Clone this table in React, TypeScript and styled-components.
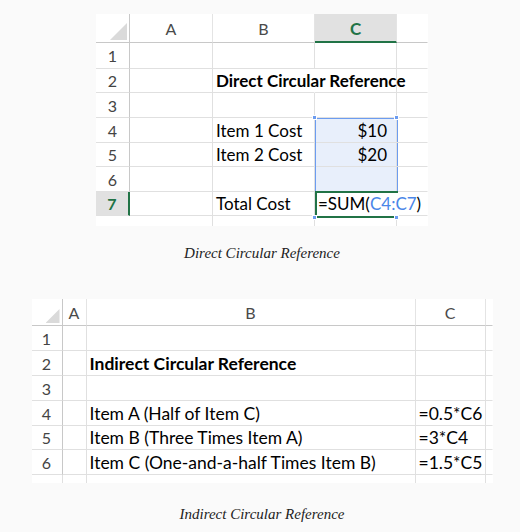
import React from "react";
import styled, { createGlobalStyle, css } from "styled-components";

const Global = createGlobalStyle`
  html, body { margin: 0; padding: 0; background: #fafafa; }
  * { box-sizing: border-box; }
`;

const GREEN = "#217346";
const BLUE = "#6c9cf0";
const GRID = "#e0e0e0";
const HEAD_LINE = "#c8c8c8";
const CELL_FONT = `"Lato", "Open Sans", sans-serif`;

const Page = styled.div`
  width: 520px;
  height: 532px;
  display: flex;
  flex-direction: column;
  align-items: center;
  padding: 14px 0 0 4px;
`;

const Sheet = styled.div<{ $cols: string; $rows: string }>`
  position: relative;
  display: grid;
  grid-template-columns: ${(p) => p.$cols};
  grid-template-rows: ${(p) => p.$rows};
  background: #fff;
  font-family: ${CELL_FONT};
  color: #000;
`;

const Corner = styled.div`
  position: relative;
  border-right: 1px solid ${HEAD_LINE};
  border-bottom: 1px solid ${HEAD_LINE};
`;

const CornerTriangle = styled.div<{ $size: number }>`
  position: absolute;
  right: 2px;
  bottom: 2px;
  width: ${(p) => p.$size}px;
  height: ${(p) => p.$size}px;
  background: #dadada;
  clip-path: polygon(100% 0, 100% 100%, 0 100%);
`;

const ColHead = styled.div<{ $active?: boolean; $size: number; $last?: boolean }>`
  display: flex;
  align-items: center;
  justify-content: center;
  font-size: ${(p) => p.$size}px;
  color: #4a4a4a;
  border-bottom: 1px solid ${HEAD_LINE};
  border-right: 1px solid ${(p) => (p.$last ? "transparent" : "#e4e4e4")};
  ${(p) =>
    p.$active &&
    css`
      background: #e1e1e1;
      color: ${GREEN};
      font-weight: 700;
      font-size: ${p.$size + 1}px;
      border-bottom: 2px solid ${GREEN};
      padding-top: 1px;
    `}
`;

const RowHead = styled.div<{ $active?: boolean; $size: number }>`
  display: flex;
  align-items: center;
  justify-content: center;
  font-size: ${(p) => p.$size}px;
  color: #444;
  border-right: 1px solid ${HEAD_LINE};
  border-bottom: 1px solid ${GRID};
  ${(p) =>
    p.$active &&
    css`
      background: #e1e1e1;
      color: ${GREEN};
      font-weight: 700;
      border-right: 2px solid ${GREEN};
    `}
`;

const Cell = styled.div<{
  $bold?: boolean;
  $right?: boolean;
  $fill?: boolean;
  $size: number;
  $noRight?: boolean;
  $noBottom?: boolean;
}>`
  display: flex;
  align-items: center;
  justify-content: ${(p) => (p.$right ? "flex-end" : "flex-start")};
  padding: ${(p) => (p.$right ? "0 9px 0 0" : "0 0 0 3px")};
  font-size: ${(p) => p.$size}px;
  font-weight: ${(p) => (p.$bold ? 700 : 400)};
  white-space: nowrap;
  overflow: visible;
  position: relative;
  z-index: ${(p) => (p.$noRight ? 1 : 0)};
  background: ${(p) => (p.$fill ? "#e8effb" : "transparent")};
  border-right: 1px solid ${(p) => (p.$noRight ? "transparent" : GRID)};
  border-bottom: 1px solid ${(p) => (p.$noBottom ? "transparent" : GRID)};
`;

const Blank = styled.div<{ $lines?: boolean }>`
  border-right: 1px solid ${(p) => (p.$lines ? GRID : "transparent")};
`;

const Ref = styled.span`
  color: #4a86e8;
`;

const Caret = styled.span`
  display: inline-block;
  width: 1px;
  height: 22px;
  background: #000;
  margin-left: 3px;
`;

const RangeBox = styled.div`
  position: absolute;
  left: 219px;
  top: 104px;
  width: 83px;
  height: 75px;
  border: 1.5px solid ${BLUE};
  border-bottom: none;
  pointer-events: none;
`;

const ActiveBox = styled.div`
  position: absolute;
  left: 219px;
  top: 177px;
  width: 83px;
  height: 27px;
  border: 2px solid ${GREEN};
  border-right: none;
  pointer-events: none;
  z-index: 2;
`;

const Handle = styled.div<{ $x: number; $y: number }>`
  position: absolute;
  left: ${(p) => p.$x}px;
  top: ${(p) => p.$y}px;
  width: 5px;
  height: 5px;
  background: ${BLUE};
  border: 1px solid #fff;
  z-index: 3;
`;

const Caption = styled.div<{ $mt: number }>`
  margin-top: ${(p) => p.$mt}px;
  font-family: "Liberation Serif", "Times New Roman", serif;
  font-style: italic;
  font-size: 15px;
  color: #222;
  line-height: 18px;
`;

const Spacer = styled.div`
  height: 37px;
`;

type Row1 = { b?: string; bold?: boolean; c?: React.ReactNode; fill?: boolean };

const rows1: Row1[] = [
  {},
  { b: "Direct Circular Reference", bold: true },
  {},
  { b: "Item 1 Cost", c: "$10", fill: true },
  { b: "Item 2 Cost", c: "$20", fill: true },
  { fill: true },
  {},
];

const rows2: { b?: string; bold?: boolean; c?: string }[] = [
  {},
  { b: "Indirect Circular Reference", bold: true },
  {},
  { b: "Item A (Half of Item C)", c: "=0.5*C6" },
  { b: "Item B (Three Times Item A)", c: "=3*C4" },
  { b: "Item C (One-and-a-half Times Item B)", c: "=1.5*C5" },
];

function DirectSheet() {
  return (
    <Sheet $cols="34px 83px 102px 82px 31px" $rows="29px 26px 24px 25px 25px 24px 25px 24px 10px">
      <Corner>
        <CornerTriangle $size={17} />
      </Corner>
      <ColHead $size={16}>A</ColHead>
      <ColHead $size={16}>B</ColHead>
      <ColHead $size={16} $active>
        C
      </ColHead>
      <ColHead $size={16} $last />
      {rows1.map((r, i) => {
        const n = i + 1;
        const isActive = n === 7;
        return (
          <React.Fragment key={n}>
            <RowHead $size={16} $active={isActive}>
              {n}
            </RowHead>
            <Cell $size={17} />
            <Cell $size={17} $bold={r.bold} $noRight={r.bold}>
              {isActive ? "Total Cost" : r.b}
            </Cell>
            {isActive ? (
              <Cell $size={17} $noBottom $noRight>
                =SUM(<Ref>C4:C7</Ref>)<Caret />
              </Cell>
            ) : (
              <Cell $size={17} $right $fill={r.fill}>
                {r.c}
              </Cell>
            )}
            <Cell $size={17} $noRight />
          </React.Fragment>
        );
      })}
      <Blank />
      <Blank $lines />
      <Blank $lines />
      <Blank $lines />
      <Blank />
      <RangeBox />
      <ActiveBox />
      <Handle $x={216} $y={101} />
      <Handle $x={298} $y={101} />
      <Handle $x={216} $y={201} />
      <Handle $x={298} $y={201} />
    </Sheet>
  );
}

function IndirectSheet() {
  return (
    <Sheet $cols="31px 24px 329px 70px 7px" $rows="27px 25px 25px 25px 25px 24px 25px 8px">
      <Corner>
        <CornerTriangle $size={14} />
      </Corner>
      <ColHead $size={16}>A</ColHead>
      <ColHead $size={16}>B</ColHead>
      <ColHead $size={16}>C</ColHead>
      <ColHead $size={16} $last />
      {rows2.map((r, i) => (
        <React.Fragment key={i}>
          <RowHead $size={16}>{i + 1}</RowHead>
          <Cell $size={17.5} />
          <Cell $size={17.5} $bold={r.bold}>
            {r.b}
          </Cell>
          <Cell $size={17.5}>{r.c}</Cell>
          <Cell $size={17.5} $noRight />
        </React.Fragment>
      ))}
      <Blank $lines />
      <Blank $lines />
      <Blank $lines />
      <Blank $lines />
      <Blank />
    </Sheet>
  );
}

export default function App() {
  return (
    <>
      <Global />
      <Page>
        <DirectSheet />
        <Caption $mt={18}>Direct Circular Reference</Caption>
        <Spacer />
        <IndirectSheet />
        <Caption $mt={22}>Indirect Circular Reference</Caption>
      </Page>
    </>
  );
}
